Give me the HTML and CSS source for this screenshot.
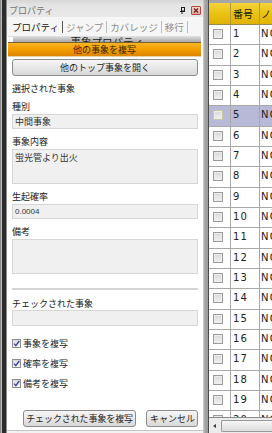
FILE: index.html
```html
<!DOCTYPE html>
<html lang="ja">
<head>
    <meta charset="utf-8">
    <meta name="viewport" content="width=device-width, initial-scale=1">
    <title>事象プロパティ</title>
    <link rel="stylesheet" href="styles.css">
</head>
<body>
<div class="app">
    <div class="frame-edge"></div>

    <aside class="panel">
        <header class="panel-title">
            <span class="panel-title__text">プロパティ</span>
            <svg class="pin" width="5" height="7" viewBox="0 0 5 7"><rect x="1.5" y="0.5" width="3" height="3.5" fill="none" stroke="#1e1e1e"/><path d="M0 4.5h5M2 4.5v2.5" stroke="#1e1e1e" fill="none"/></svg>
            <span class="close-btn"><svg width="8" height="7" viewBox="0 0 8 7"><path d="M2 1.5l4 4M6 1.5l-4 4" stroke="#6b2a24" stroke-width="1.3"/></svg></span>
        </header>

        <nav class="tabs">
            <span class="tab tab--active">プロパティ</span>
            <span class="tab">ジャンプ</span>
            <span class="tab">カバレッジ</span>
            <span class="tab">移行</span>
        </nav>

        <div class="panel-body">
            <div class="group-head">
                <span class="group-head__icon"></span>
                <span class="group-head__text">事象プロパティ</span>
            </div>
            <div class="copy-bar">他の事象を複写</div>

            <div class="form">
                <button class="btn btn--wide">他のトップ事象を開く</button>

                <div class="form-heading">選択された事象</div>

                <div class="form-label">種別</div>
                <div class="field">中間事象</div>

                <div class="form-label">事象内容</div>
                <div class="field field--area">蛍光管より出火</div>

                <div class="form-label">生起確率</div>
                <div class="field field--num">0.0004</div>

                <div class="form-label">備考</div>
                <div class="field field--area"></div>

                <hr class="divider">

                <div class="form-label">チェックされた事象</div>
                <div class="field field--tall"></div>

                <ul class="checks">
                    <li class="check"><span class="check__box"><svg width="7" height="7" viewBox="0 0 7 7"><path d="M1 3.6l1.8 2L6.2 1" fill="none" stroke="#34449a" stroke-width="1.3"/></svg></span>事象を複写</li>
                    <li class="check"><span class="check__box"><svg width="7" height="7" viewBox="0 0 7 7"><path d="M1 3.6l1.8 2L6.2 1" fill="none" stroke="#34449a" stroke-width="1.3"/></svg></span>確率を複写</li>
                    <li class="check"><span class="check__box"><svg width="7" height="7" viewBox="0 0 7 7"><path d="M1 3.6l1.8 2L6.2 1" fill="none" stroke="#34449a" stroke-width="1.3"/></svg></span>備考を複写</li>
                </ul>

                <div class="actions">
                    <button class="btn btn--copy">チェックされた事象を複写</button>
                    <button class="btn btn--cancel">キャンセル</button>
                </div>
            </div>
        </div>
        <div class="panel-foot"></div>
    </aside>

    <div class="splitter"></div>

    <section class="grid">
        <div class="grid-head">
            <div class="cell cell--check"></div>
            <div class="cell cell--num">番号</div>
            <div class="cell cell--name">ノード名</div>
        </div>
        <div class="grid-rows">
            <div class="row"><div class="cell cell--check"><span class="box"></span></div><div class="cell cell--num">1</div><div class="cell cell--name">NO.1</div></div>
            <div class="row"><div class="cell cell--check"><span class="box"></span></div><div class="cell cell--num">2</div><div class="cell cell--name">NO.2</div></div>
            <div class="row"><div class="cell cell--check"><span class="box"></span></div><div class="cell cell--num">3</div><div class="cell cell--name">NO.3</div></div>
            <div class="row"><div class="cell cell--check"><span class="box"></span></div><div class="cell cell--num">4</div><div class="cell cell--name">NO.4</div></div>
            <div class="row row--selected"><div class="cell cell--check"><span class="box"></span></div><div class="cell cell--num">5</div><div class="cell cell--name">NO.5</div></div>
            <div class="row"><div class="cell cell--check"><span class="box"></span></div><div class="cell cell--num">6</div><div class="cell cell--name">NO.6</div></div>
            <div class="row"><div class="cell cell--check"><span class="box"></span></div><div class="cell cell--num">7</div><div class="cell cell--name">NO.7</div></div>
            <div class="row"><div class="cell cell--check"><span class="box"></span></div><div class="cell cell--num">8</div><div class="cell cell--name">NO.8</div></div>
            <div class="row"><div class="cell cell--check"><span class="box"></span></div><div class="cell cell--num">9</div><div class="cell cell--name">NO.9</div></div>
            <div class="row"><div class="cell cell--check"><span class="box"></span></div><div class="cell cell--num">10</div><div class="cell cell--name">NO.10</div></div>
            <div class="row"><div class="cell cell--check"><span class="box"></span></div><div class="cell cell--num">11</div><div class="cell cell--name">NO.11</div></div>
            <div class="row"><div class="cell cell--check"><span class="box"></span></div><div class="cell cell--num">12</div><div class="cell cell--name">NO.12</div></div>
            <div class="row"><div class="cell cell--check"><span class="box"></span></div><div class="cell cell--num">13</div><div class="cell cell--name">NO.13</div></div>
            <div class="row"><div class="cell cell--check"><span class="box"></span></div><div class="cell cell--num">14</div><div class="cell cell--name">NO.14</div></div>
            <div class="row"><div class="cell cell--check"><span class="box"></span></div><div class="cell cell--num">15</div><div class="cell cell--name">NO.15</div></div>
            <div class="row"><div class="cell cell--check"><span class="box"></span></div><div class="cell cell--num">16</div><div class="cell cell--name">NO.16</div></div>
            <div class="row"><div class="cell cell--check"><span class="box"></span></div><div class="cell cell--num">17</div><div class="cell cell--name">NO.17</div></div>
            <div class="row"><div class="cell cell--check"><span class="box"></span></div><div class="cell cell--num">18</div><div class="cell cell--name">NO.18</div></div>
            <div class="row"><div class="cell cell--check"><span class="box"></span></div><div class="cell cell--num">19</div><div class="cell cell--name">NO.19</div></div>
            <div class="row"><div class="cell cell--check"><span class="box"></span></div><div class="cell cell--num">20</div><div class="cell cell--name">NO.20</div></div>
        </div>
        <div class="hscroll">
            <span class="hscroll__arrow"></span>
            <span class="hscroll__thumb"></span>
        </div>
    </section>
</div>
</body>
</html>
```

FILE: styles.css
```css
html,
body {
    margin: 0;
    height: 100%;
}

*,
*:before,
*:after {
    box-sizing: border-box;
}

body {
    font-family: "Noto Sans CJK JP", "Noto Sans", sans-serif;
    font-size: 9px;
    color: #222;
    background: #fff;
    overflow: hidden;
}

.app {
    display: flex;
    width: 272px;
    height: 433px;
}

.frame-edge {
    flex: none;
    width: 7px;
    background: linear-gradient(to right, #8a8a8a 0 1px, #bdbdbd 1px 2px, #2c2c2c 2px 6px, #8e8e8e 6px 7px);
}

/* property panel */

.panel {
    flex: none;
    width: 196px;
    display: flex;
    flex-direction: column;
    background: #fff;
    overflow: hidden;
}

.panel-title {
    height: 17px;
    padding: 4px 2px 0 2px;
    display: flex;
    align-items: center;
    background: linear-gradient(#d6d6d6, #e4e4e4 30%, #e8e8e8);
    color: #737373;
    line-height: 12px;
}

.panel-title__text {
    flex: 1;
}

.pin {
    margin-right: 6px;
}

.close-btn {
    width: 10px;
    height: 9px;
    display: flex;
    align-items: center;
    justify-content: center;
    border: 1px solid #b3473d;
    border-radius: 1px;
    background: linear-gradient(#f5d3cf, #e4a49c);
}

.tabs {
    height: 19px;
    padding-left: 2px;
    display: flex;
    align-items: center;
    background: #f6f6f6;
    font-size: 9.5px;
}

.tab {
    padding: 0 3px;
    line-height: 12px;
    color: #8d8d8d;
    border-right: 1px solid #bcbcbc;
}

.tab--active {
    color: #111;
    border-right-color: #5a5a5a;
}

.panel-body {
    flex: 1;
    display: flex;
    flex-direction: column;
}

.group-head {
    height: 6px;
    margin: 0 2px 0 1px;
    display: flex;
    overflow: hidden;
    background: linear-gradient(#e2e2e2, #a8a8a8);
}

.group-head__icon {
    width: 5px;
    height: 6px;
    margin: 1px 0 0 0;
    background: #fff;
}

.group-head__text {
    flex: 1;
    text-align: center;
    font-size: 10.5px;
    line-height: 12px;
    color: #1e1e1e;
}

.copy-bar {
    height: 15px;
    margin: 0 2px 0 1px;
    text-align: center;
    line-height: 13px;
    color: #3a2400;
    background: linear-gradient(#f9b524, #f39e00 50%, #dd8500);
    border-top: 1px solid #7e6232;
    border-bottom: 1px solid #e8cfa6;
}

.form {
    padding: 0 5px;
    display: flex;
    flex-direction: column;
}

.btn {
    height: 17px;
    padding: 0 3px;
    font-family: inherit;
    font-size: 9px;
    line-height: 15px;
    white-space: nowrap;
    color: #1e1e1e;
    border: 1px solid #8c8c8c;
    border-radius: 3px;
    background: linear-gradient(#f6f6f6, #e8e8e8 50%, #d8d8d8);
}

.btn--wide {
    margin-top: 2px;
    width: 100%;
}

.form-heading {
    margin-top: 6px;
    line-height: 13px;
}

.form-label {
    margin-top: 6px;
    line-height: 13px;
}

.form-heading + .form-label {
    margin-top: 5px;
}

.field {
    height: 15px;
    margin-top: 1px;
    padding: 0 2px;
    line-height: 13px;
    background: #f0f0f0;
    border: 1px solid #d6d6d6;
    color: #333;
}

.field--area {
    height: 35px;
    padding-top: 1px;
}

.field--num {
    font-family: "Liberation Sans", Arial, sans-serif;
    font-size: 8px;
}

.field--tall {
    height: 16px;
    margin-top: 0;
}

.divider {
    height: 2px;
    margin: 14px 0 0 0;
    border: 0;
    background: #d4d4d4;
}

.divider + .form-label {
    margin-top: 7px;
}

.checks {
    list-style: none;
    margin: 7px 0 0 0;
    padding: 0;
}

.check {
    height: 20px;
    display: flex;
    align-items: center;
    line-height: 13px;
}

.check__box {
    width: 9px;
    height: 9px;
    margin-right: 2px;
    display: flex;
    align-items: center;
    justify-content: center;
    border: 1px solid #8e8e8e;
    background: linear-gradient(#dcdcdc, #f8f8f8);
}

.actions {
    margin-top: 17px;
    display: flex;
    justify-content: flex-end;
    gap: 10px;
}

.btn--copy {
    padding: 0 2px;
    letter-spacing: -0.1px;
}

.btn--cancel {
    width: 52px;
}

.panel-foot {
    height: 3px;
    border-top: 1px solid #c4c4c4;
    background: #f2f2f2;
}

.splitter {
    flex: none;
    width: 5px;
    background: linear-gradient(to right, #cfcfcf, #a4a4a4 40%, #9c9c9c);
}

/* event grid */

.grid {
    flex: 1;
    min-width: 0;
    display: flex;
    flex-direction: column;
    padding-top: 3px;
    background: #a6a6a6;
    border-left: 1px solid #4a4a4a;
    overflow: hidden;
}

.grid-head {
    flex: none;
    height: 22px;
    display: flex;
    background: linear-gradient(#f4d23a, #eac312 50%, #dfb304);
    border-bottom: 1px solid #9a8a50;
}

.grid-head .cell {
    display: flex;
    align-items: center;
    font-size: 10px;
    color: #111;
    border-right-color: #b49a3c;
}

.cell {
    flex: none;
    border-right: 1px solid #a8a8a8;
    white-space: nowrap;
    overflow: hidden;
}

.cell--check {
    width: 22px;
    padding: 4px 0 0 4px;
}

.cell--num {
    width: 29px;
    padding-left: 2px;
}

.cell--name {
    flex: 1;
    border-right: 0;
    padding-left: 1px;
}

.grid-rows {
    flex: 1;
    overflow: hidden;
    background: #fff;
}

.row {
    height: 20.33px;
    display: flex;
    border-bottom: 1px solid #a8a8a8;
    background: #fff;
    font-family: "DejaVu Sans", sans-serif;
    font-size: 10px;
    letter-spacing: 1.2px;
    line-height: 13px;
    color: #222;
}

.row .cell--num,
.row .cell--name {
    padding-top: 2px;
}

.row--selected {
    background: #b7b9d7;
}

.box {
    display: block;
    width: 10px;
    height: 10px;
    border: 1px solid #9c9c9c;
    background: linear-gradient(#d8d8d8, #f2f2f2);
    box-shadow: inset 0 0 0 1px #ececec;
}

.row--selected .box {
    border-color: #c8c8a8;
}

.hscroll {
    flex: none;
    height: 16px;
    display: flex;
    align-items: center;
    background: #ececec;
    border-top: 1px solid #8a8a8a;
}

.hscroll__arrow {
    margin-left: 4px;
    width: 0;
    height: 0;
    border-right: 3px solid #3a3a3a;
    border-top: 2.5px solid transparent;
    border-bottom: 2.5px solid transparent;
}

.hscroll__thumb {
    flex: 1;
    height: 12px;
    margin-left: 5px;
    border: 1px solid #9a9a9a;
    border-right: 0;
    border-radius: 2px 0 0 2px;
    background: linear-gradient(#f6f6f6, #dcdcdc);
}
```
